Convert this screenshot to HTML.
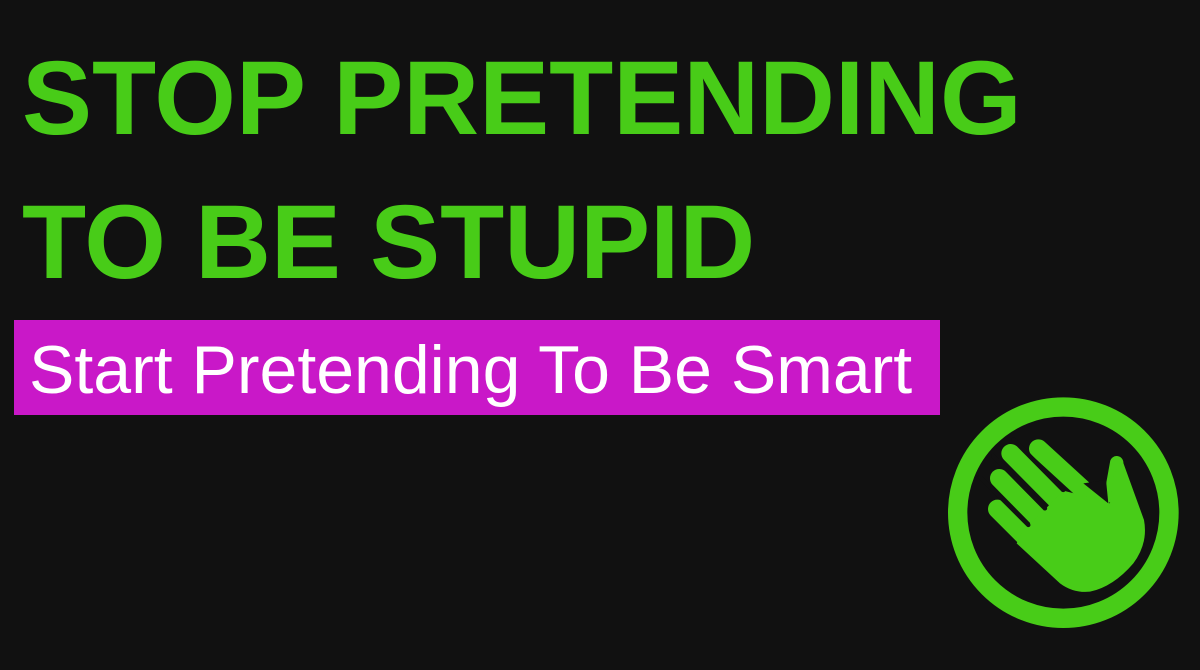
<!DOCTYPE html>
<html><head><meta charset="utf-8"><style>
html,body{margin:0;padding:0}
body{width:1200px;height:670px;background:#111111;position:relative;overflow:hidden;font-family:"Liberation Sans",sans-serif}
.h{position:absolute;left:22px;color:#48cc18;font-weight:bold;font-size:105px;line-height:1;white-space:nowrap}
.sub{position:absolute;left:14px;top:320px;width:926px;height:95px;background:#c918c8}
.sub span{position:absolute;left:15px;top:16px;color:#fff;font-size:68px;line-height:1;white-space:nowrap}
svg{position:absolute;left:940px;top:390px}
</style></head><body>
<div class="h" style="top:46px">STOP PRETENDING</div>
<div class="h" style="top:190px">TO BE STUPID</div>
<div class="sub"><span>Start Pretending To Be Smart</span></div>
<svg width="250" height="250" viewBox="0 0 750 750">
<circle cx="370" cy="368" r="317" fill="none" stroke="#48cc18" stroke-width="58"/>
<g stroke="#48cc18" stroke-linecap="round" fill="none" stroke-width="56">
<line x1="172" y1="357" x2="300" y2="485"/>
<line x1="178" y1="265" x2="340" y2="430"/>
<line x1="212" y1="190" x2="390" y2="370"/>
<line x1="295" y1="176" x2="480" y2="345"/>
</g>
<line x1="530" y1="218" x2="512" y2="318" stroke="#48cc18" stroke-width="40" stroke-linecap="round"/>
<path d="M250,420 L265,405 L315,358 L370,302 L480,330 L510,340 L520,260 L545,205 L612,390 Q625,460 580,520 Q520,590 450,605 Q400,610 360,580 L230,460 Z" fill="#48cc18"/>
<g stroke="#111" stroke-linecap="round" stroke-width="13">
<line x1="120" y1="260" x2="265" y2="405"/>
<line x1="160" y1="198" x2="315" y2="355"/>
<line x1="220" y1="148" x2="370" y2="300"/>
</g>
<path d="M430,280 L505,340 L498,270 Z" fill="#111"/>
</svg>
</body></html>
